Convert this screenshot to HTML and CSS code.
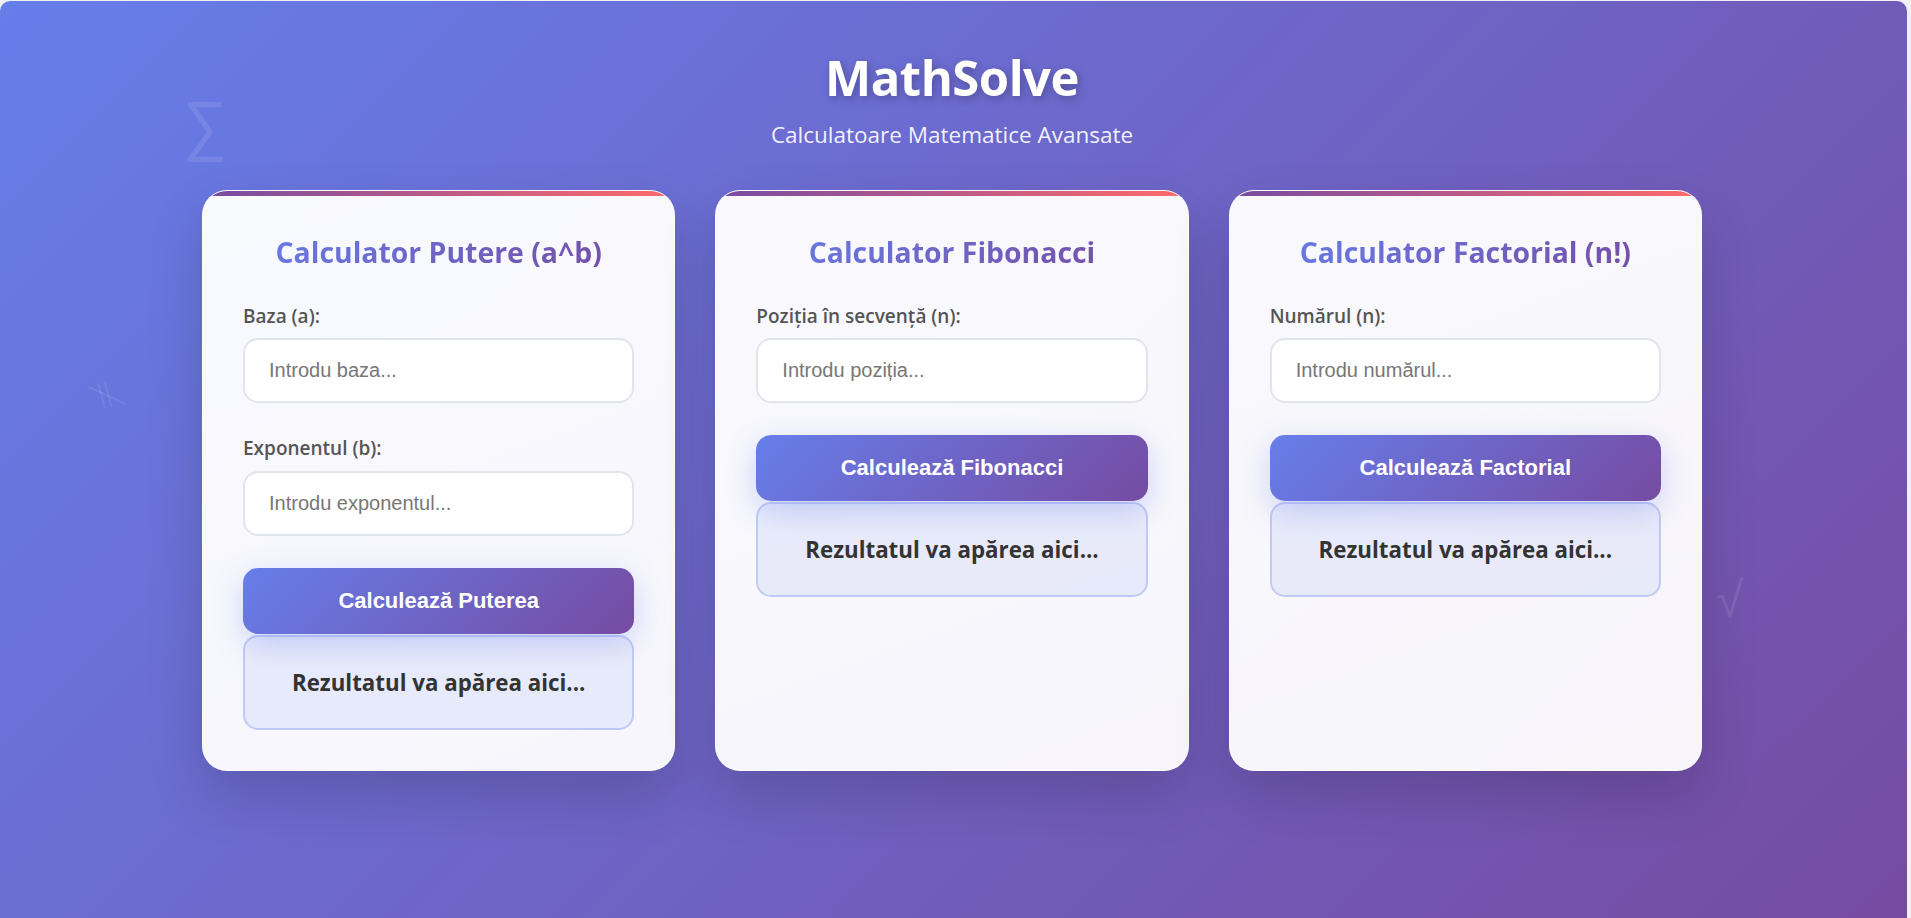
FILE: index.html
```html
<!DOCTYPE html>
<html lang="ro">
<head>
<meta charset="utf-8">
<title>MathSolve</title>
<link rel="stylesheet" href="styles.css">
</head>
<body>
<div class="app">
  <span class="symbol sym-sigma">∑</span>
  <span class="symbol sym-neq">≠</span>
  <span class="symbol sym-sqrt">√</span>

  <header class="hero">
    <h1 class="brand">MathSolve</h1>
    <p class="tagline">Calculatoare Matematice Avansate</p>
  </header>

  <main class="grid">
    <section class="card">
      <h2 class="card-title">Calculator Putere (a^b)</h2>
      <div class="field">
        <label class="field-label" for="base">Baza (a):</label>
        <input class="field-input" id="base" type="text" placeholder="Introdu baza...">
      </div>
      <div class="field">
        <label class="field-label" for="exp">Exponentul (b):</label>
        <input class="field-input" id="exp" type="text" placeholder="Introdu exponentul...">
      </div>
      <button class="calc-btn" type="button">Calculează Puterea</button>
      <div class="result">Rezultatul va apărea aici...</div>
    </section>

    <section class="card">
      <h2 class="card-title">Calculator Fibonacci</h2>
      <div class="field">
        <label class="field-label" for="fib">Poziția în secvență (n):</label>
        <input class="field-input" id="fib" type="text" placeholder="Introdu poziția...">
      </div>
      <button class="calc-btn" type="button">Calculează Fibonacci</button>
      <div class="result">Rezultatul va apărea aici...</div>
    </section>

    <section class="card">
      <h2 class="card-title">Calculator Factorial (n!)</h2>
      <div class="field">
        <label class="field-label" for="fact">Numărul (n):</label>
        <input class="field-input" id="fact" type="text" placeholder="Introdu numărul...">
      </div>
      <button class="calc-btn" type="button">Calculează Factorial</button>
      <div class="result">Rezultatul va apărea aici...</div>
    </section>
  </main>
</div>
</body>
</html>
```

FILE: styles.css
```css
* {
  box-sizing: border-box;
}

html, body {
  margin: 0;
  height: 100%;
}

body {
  background: #f1f1f4;
  font-family: "Open Sans", "Noto Sans", "DejaVu Sans", sans-serif;
  overflow: hidden;
}

.app {
  position: relative;
  margin: 1px 4px 0 0;
  min-height: 917px;
  border-radius: 10px 10px 0 0;
  background: linear-gradient(135deg, #667eea 0%, #764ba2 100%);
  overflow: hidden;
  padding: 45px 23px 40px 20px;
}

.symbol {
  position: absolute;
  color: rgba(255, 255, 255, 0.1);
  font-family: "DejaVu Sans", sans-serif;
  font-weight: 300;
  line-height: 1;
  pointer-events: none;
}

.sym-sigma {
  left: 183px;
  top: 93px;
  font-size: 62px;
  transform: scaleY(1.08);
}

.sym-neq {
  left: 88px;
  top: 373px;
  font-size: 42px;
  transform: rotate(75deg);
}

.sym-sqrt {
  left: 1716px;
  top: 574px;
  font-size: 50px;
}

.hero {
  position: relative;
  text-align: center;
  color: #fff;
}

.brand {
  margin: 0;
  font-size: 49px;
  font-weight: 700;
  line-height: 1.3;
  letter-spacing: -0.5px;
  text-shadow: 2px 3px 8px rgba(0, 0, 0, 0.25);
}

.tagline {
  margin: 9px 0 0;
  font-size: 22.5px;
  line-height: 1.4;
  color: rgba(255, 255, 255, 0.92);
}

.grid {
  position: relative;
  display: grid;
  grid-template-columns: repeat(3, 1fr);
  gap: 40px;
  max-width: 1500px;
  margin: 40px auto 0;
}

.card {
  position: relative;
  background: linear-gradient(160deg, rgba(255, 255, 255, 0.96) 0%, rgba(255, 255, 255, 0.94) 100%);
  border: 1px solid rgba(255, 255, 255, 0.6);
  border-radius: 25px;
  padding: 42px 40px 40px;
  box-shadow: 0 25px 55px rgba(0, 0, 0, 0.16);
  overflow: hidden;
}

.card::before {
  content: "";
  position: absolute;
  top: 0;
  left: 0;
  right: 0;
  height: 5px;
  background: linear-gradient(90deg, #764ba2 0%, #ff6b6b 100%);
}

.card-title {
  margin: 0 0 31px;
  text-align: center;
  font-size: 28.4px;
  font-weight: 700;
  line-height: 1.35;
  background: linear-gradient(135deg, #667eea 0%, #764ba2 100%);
  -webkit-background-clip: text;
  background-clip: text;
  color: transparent;
}

.field {
  margin-bottom: 32px;
}

.field-label {
  display: block;
  margin-bottom: 9px;
  font-size: 19px;
  font-weight: 600;
  line-height: 1.4;
  color: #555;
}

.field-input {
  display: block;
  width: 100%;
  height: 65px;
  padding: 0 24px;
  border: 2px solid #e1e5e9;
  border-radius: 15px;
  background: #fff;
  font-family: "Liberation Sans", Arial, sans-serif;
  font-size: 20px;
  color: #333;
  outline: none;
}

.field-input::placeholder {
  color: #777;
}

.calc-btn {
  display: block;
  width: 100%;
  height: 66px;
  border: none;
  border-radius: 15px;
  background: linear-gradient(135deg, #667eea 0%, #764ba2 100%);
  color: #fff;
  font-family: "Liberation Sans", Arial, sans-serif;
  font-size: 22px;
  font-weight: 700;
  box-shadow: 0 10px 30px rgba(102, 126, 234, 0.3);
  cursor: pointer;
}

.result {
  display: flex;
  align-items: center;
  justify-content: center;
  height: 95px;
  margin-top: 1px;
  border: 2px solid rgba(102, 126, 234, 0.3);
  border-radius: 15px;
  background: rgba(102, 126, 234, 0.1);
  font-size: 22.3px;
  font-weight: 700;
  color: #333;
}
```
